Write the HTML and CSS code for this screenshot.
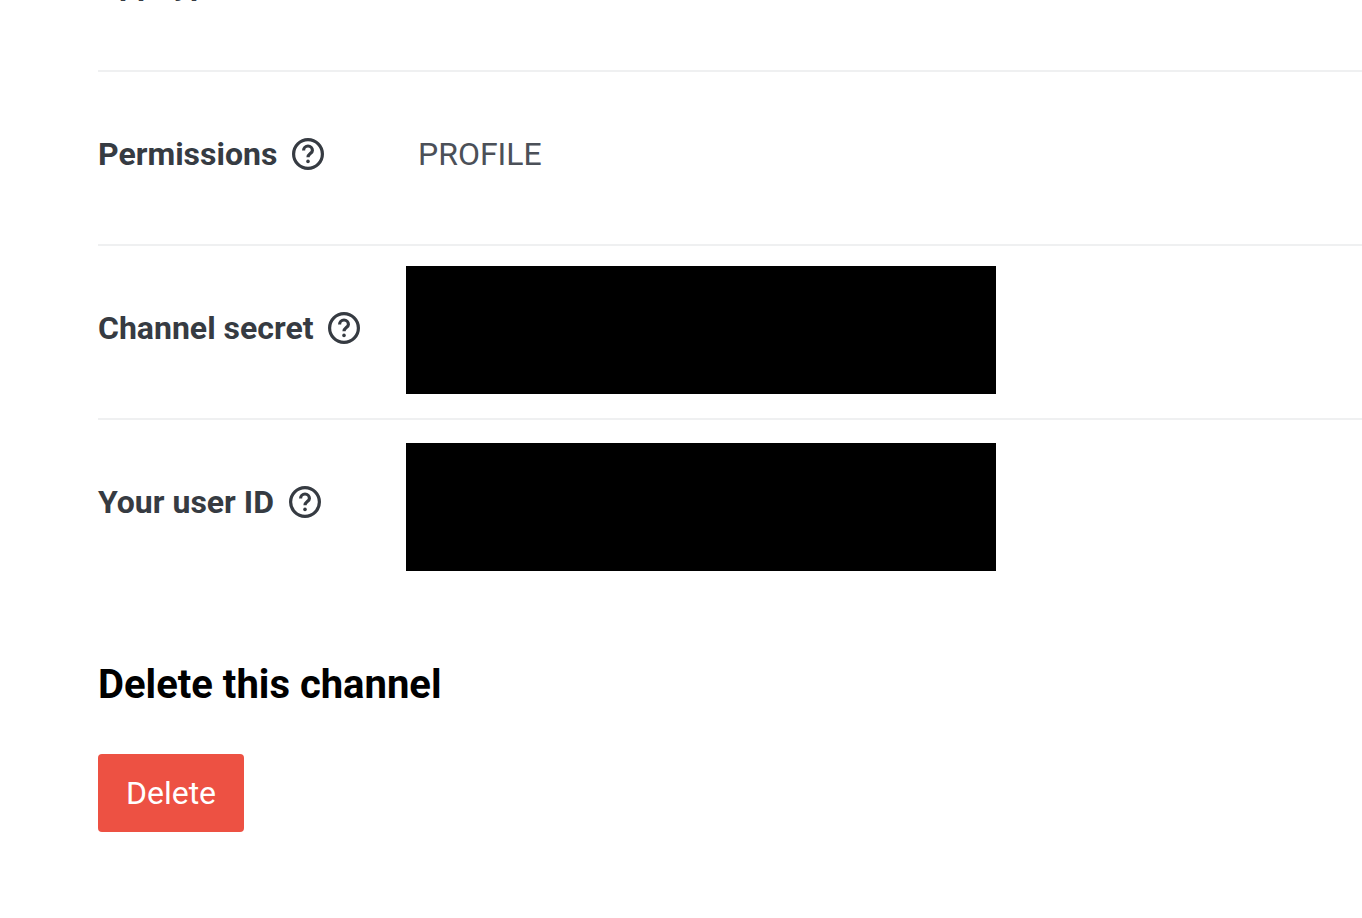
FILE: index.html
```html
<!DOCTYPE html>
<html lang="en">

<head>
    <meta charset="UTF-8" />
    <meta name="viewport" content="width=device-width, initial-scale=1.0" />
    <title>Basic settings</title>
    <link rel="stylesheet" href="styles.css">
</head>

<body>
    <div class="page">
        <!-- rows -->
        <div class="row row-top">
            <div class="row-label">App types
                <svg class="help" viewBox="0 0 32 32"><circle cx="16" cy="16" r="14.4"/><path d="M11.6 12.4a4.4 4.4 0 0 1 8.8 0c0 3-4.4 3.4-4.4 6.8"/><circle class="dot" cx="16" cy="23.4" r="1.8"/></svg>
            </div>
        </div>
        <div class="row">
            <div class="row-label">Permissions
                <svg class="help" viewBox="0 0 32 32"><circle cx="16" cy="16" r="14.4"/><path d="M11.6 12.4a4.4 4.4 0 0 1 8.8 0c0 3-4.4 3.4-4.4 6.8"/><circle class="dot" cx="16" cy="23.4" r="1.8"/></svg>
            </div>
            <div class="row-value">PROFILE</div>
        </div>
        <div class="row">
            <div class="row-label">Channel secret
                <svg class="help" viewBox="0 0 32 32"><circle cx="16" cy="16" r="14.4"/><path d="M11.6 12.4a4.4 4.4 0 0 1 8.8 0c0 3-4.4 3.4-4.4 6.8"/><circle class="dot" cx="16" cy="23.4" r="1.8"/></svg>
            </div>
            <div class="redacted redacted-secret"></div>
        </div>
        <div class="row row-last">
            <div class="row-label">Your user ID
                <svg class="help" viewBox="0 0 32 32"><circle cx="16" cy="16" r="14.4"/><path d="M11.6 12.4a4.4 4.4 0 0 1 8.8 0c0 3-4.4 3.4-4.4 6.8"/><circle class="dot" cx="16" cy="23.4" r="1.8"/></svg>
            </div>
            <div class="redacted redacted-id"></div>
        </div>
        <h2 class="section-title">Delete this channel</h2>
        <a href="javascript:;" class="btn-delete">Delete</a>
    </div>
</body>

</html>
```

FILE: styles.css
```css
* {
    margin: 0;
    padding: 0;
    box-sizing: border-box;
}

html,
body {
    height: 918px;
    overflow: hidden;
    background-color: #fff;
}

body {
    font-family: Roboto, "Liberation Sans", sans-serif;
}

/* page is scrolled, the first row is cut off by the window */
.page {
    margin-top: -102px;
    padding-left: 98px;
}

.row {
    display: flex;
    align-items: center;
    height: 174px;
    border-bottom: 2px solid #eff0f1;
}

.row-last {
    border-bottom-color: transparent;
}

.row-label {
    display: flex;
    align-items: center;
    gap: 14.7px;
    width: 308px;
    margin-bottom: 8px;
    font-size: 32px;
    font-weight: 700;
    color: #363b42;
}

.row-top .row-label {
    margin-bottom: 0;
}

.row-value {
    margin-left: 12px;
    margin-bottom: 8px;
    font-size: 32px;
    color: #4b5058;
}

.help {
    width: 32px;
    height: 32px;
    fill: none;
    stroke: #363b42;
    stroke-width: 3.2;
}

.help .dot {
    fill: #363b42;
    stroke: none;
}

.redacted {
    width: 590px;
    height: 128px;
    background-color: #000;
}

.redacted-secret {
    margin-bottom: 4px;
}

.redacted-id {
    margin-top: 2px;
}

.section-title {
    margin-top: 67px;
    font-size: 40px;
    font-weight: 700;
    color: #000;
}

.btn-delete {
    display: block;
    width: 146px;
    height: 78px;
    margin-top: 46px;
    border-radius: 4px;
    background-color: #ed5143;
    color: #fff;
    font-size: 32px;
    line-height: 78px;
    text-align: center;
    text-decoration: none;
}
```
